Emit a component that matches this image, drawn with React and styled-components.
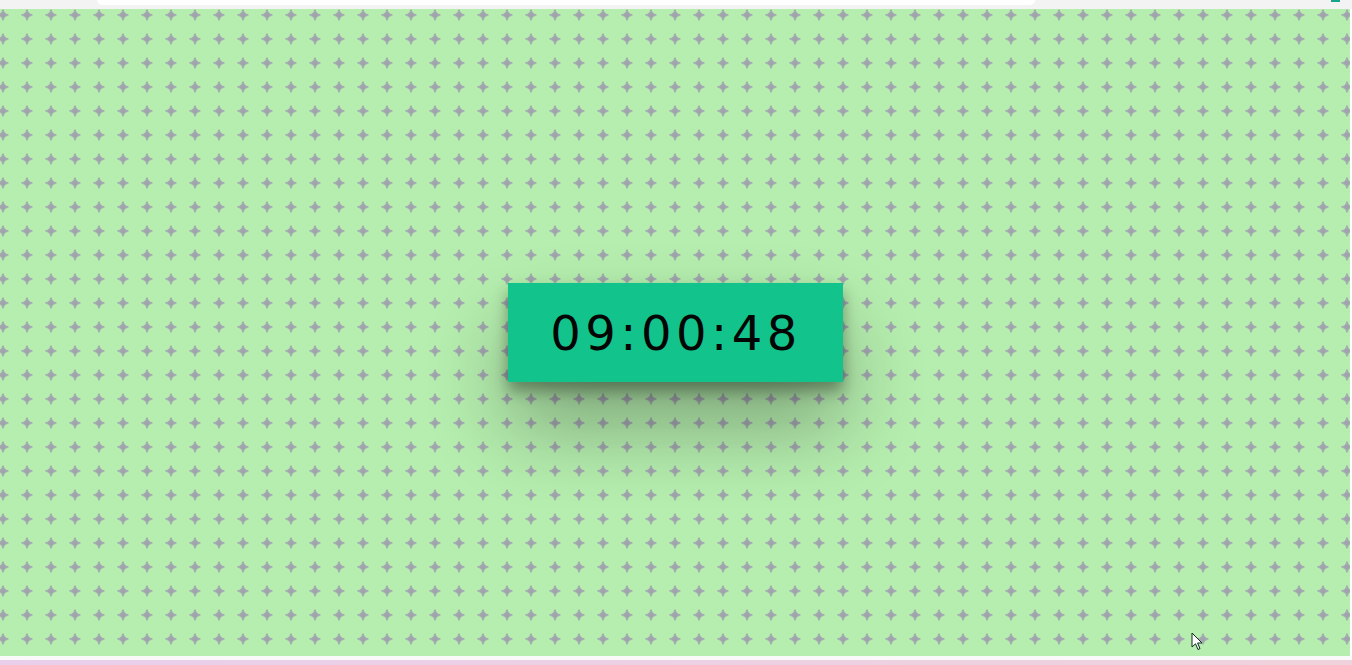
import React from 'react';
import styled, { createGlobalStyle } from 'styled-components';

const star = encodeURIComponent(
  `<svg xmlns="http://www.w3.org/2000/svg" width="24" height="24" viewBox="0 0 24 24"><path d="M12 6.6 Q12.7 11.3 17.4 12 Q12.7 12.7 12 17.4 Q11.3 12.7 6.6 12 Q11.3 11.3 12 6.6Z" fill="#a1a4ae" stroke="#a1a4ae" stroke-width="0.9" stroke-linejoin="round"/></svg>`
);

const GlobalStyle = createGlobalStyle`
  html, body {
    margin: 0;
    padding: 0;
    overflow: hidden;
  }
  body {
    font-family: "DejaVu Sans", sans-serif;
  }
`;

const Page = styled.div`
  position: relative;
  display: flex;
  flex-direction: column;
  width: 1352px;
  height: 665px;
`;

const Chrome = styled.div`
  height: 9px;
  flex: none;
  display: flex;
  background: #f3f3f3;
`;

const AddressBar = styled.div`
  margin-left: 97px;
  width: 938px;
  height: 5px;
  background: #ffffff;
  border-radius: 0 0 10px 10px;
`;

const ExtensionMark = styled.div`
  margin-left: auto;
  margin-right: 12px;
  width: 9px;
  height: 2px;
  background: #1aa58a;
`;

const Stage = styled.main`
  flex: 1;
  display: flex;
  align-items: center;
  justify-content: center;
  background-color: #b5eeae;
  background-image: url("data:image/svg+xml,${star}");
  background-size: 24px 24px;
  background-position: -9.5px -6.5px;
  margin-right: 2px;
`;

const Clock = styled.div`
  width: 335px;
  height: 99px;
  display: flex;
  align-items: center;
  justify-content: center;
  background: #12c48b;
  box-shadow: 0 9px 14px rgba(0, 0, 0, 0.35), 0 45px 80px rgba(0, 0, 0, 0.3);
  color: #050505;
  font-size: 48px;
  letter-spacing: 4.5px;
  padding-left: 2px;
  box-sizing: border-box;
`;

const Footer = styled.div`
  flex: none;
  height: 9px;
  display: flex;
  flex-direction: column;
`;

const FooterLine = styled.div`
  height: 4px;
  background: #fafafa;
`;

const FooterStrip = styled.div`
  flex: 1;
  background: linear-gradient(90deg, #e9cfec, #f0d2dc);
`;

const Cursor = styled.svg`
  position: absolute;
  left: 1191px;
  top: 632px;
`;

export default function App() {
  return (
    <Page>
      <GlobalStyle />
      <Chrome>
        <AddressBar />
        <ExtensionMark />
      </Chrome>
      <Stage>
        <Clock>09:00:48</Clock>
      </Stage>
      <Footer>
        <FooterLine />
        <FooterStrip />
      </Footer>
      <Cursor width="13" height="20" viewBox="0 0 13 20">
        <path d="M1 1 L1 15 L4.5 11.8 L7 17.5 L9 16.6 L6.6 11 L11 11 Z" fill="#fff" stroke="#0d2a1e" strokeWidth="1" strokeLinejoin="round" />
      </Cursor>
    </Page>
  );
}
